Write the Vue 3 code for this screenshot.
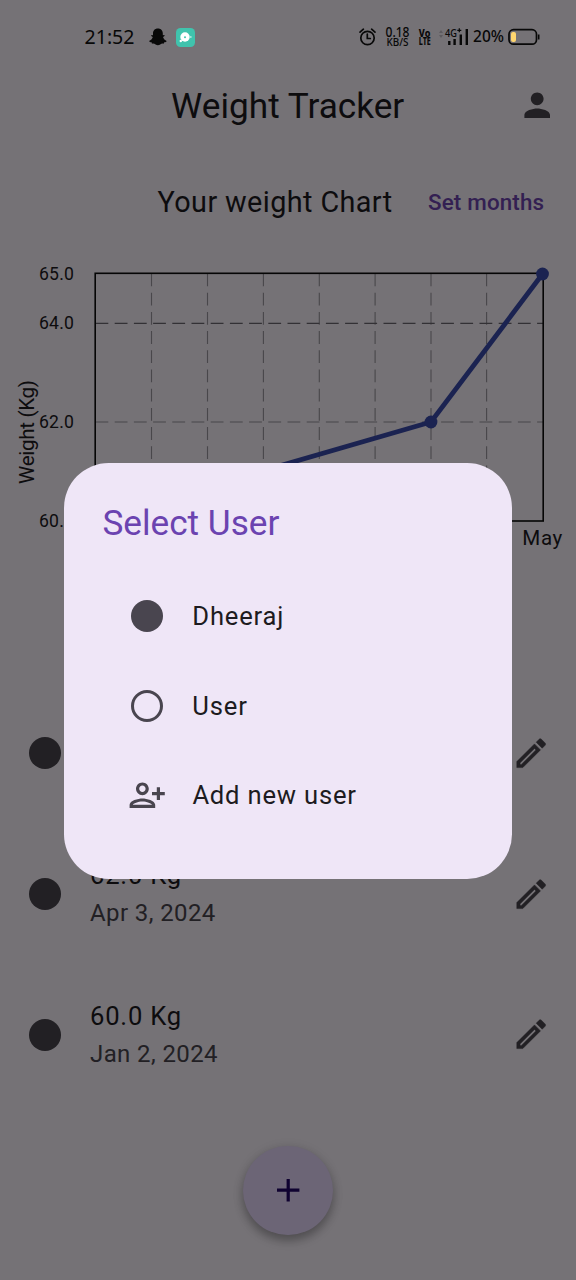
<script setup>
const entries = [
  { weight: '65.0 Kg', date: 'May 2, 2024' },
  { weight: '62.0 Kg', date: 'Apr 3, 2024' },
  { weight: '60.0 Kg', date: 'Jan 2, 2024' },
]
const columns = [151.5, 207.5, 263.4, 319.3, 375.1, 431, 486.6]
const pencil =
  'M14.06 9.02l.92.92L5.92 19H5v-.92l9.06-9.06M17.66 3c-.25 0-.51.1-.7.29l-1.83 1.83 3.75 3.75 1.83-1.83c.39-.39.39-1.02 0-1.41l-2.34-2.34c-.2-.2-.45-.29-.71-.29zm-3.6 3.19L3 17.25V21h3.75L17.81 9.94l-3.75-3.75z'
const person =
  'M12 12c2.21 0 4-1.79 4-4s-1.79-4-4-4-4 1.79-4 4 1.79 4 4 4zm0 2c-2.67 0-8 1.34-8 4v2h16v-2c0-2.66-5.33-4-8-4z'
const personAdd =
  'M13 8c0-2.21-1.79-4-4-4S5 5.79 5 8s1.79 4 4 4 4-1.79 4-4zm-2 0c0 1.1-.9 2-2 2s-2-.9-2-2 .9-2 2-2 2 .9 2 2zM1 18v2h16v-2c0-2.66-5.33-4-8-4s-8 1.34-8 4zm2 0c.2-.71 3.3-2 6-2 2.69 0 5.77 1.28 6 2H3zm17-3v-3h3v-2h-3V7h-2v3h-3v2h3v3h2z'
</script>

<template>
  <div class="screen">
    <svg class="status" viewBox="0 0 576 66">
      <text class="clock" x="84.5" y="44.2" textLength="50" lengthAdjust="spacingAndGlyphs">21:52</text>
      <!-- ghost notification -->
      <path d="M157.900 28.600c-3.200 0-4.900 2.200-4.900 4.900v1.700l-1.500-.3c-.8.700 0 1.500 1.300 2-.6 2-1.900 3.300-3.700 4 .2 1 1.300 1.200 2.500 1.400l.4 1.400c1.500-.2 2.500-.1 3.600.8 1.500 1 3.100 1 4.600 0 1.100-.9 2.100-1 3.600-.8l.4-1.400c1.200-.2 2.300-.4 2.500-1.400-1.800-.7-3.100-2-3.700-4 1.300-.5 2.100-1.300 1.300-2l-1.500.3v-1.700c0-2.700-1.700-4.900-4.900-4.900z" />
      <!-- teal app notification -->
      <rect x="176" y="28" width="19" height="19" rx="4.500" fill="#40c3ad" />
      <circle cx="185" cy="37" r="4.700" fill="#fff" />
      <circle cx="180.800" cy="41" r="1.200" fill="#fff" />
      <circle cx="190.700" cy="37" r="1.100" fill="#a9e6dc" />
      <circle cx="185" cy="37.200" r="1" fill="#40c3ad" />
      <!-- alarm -->
      <g fill="none" stroke="#080808" stroke-width="1.700" stroke-linecap="round">
        <circle cx="367.500" cy="38" r="6.700" />
        <path d="M367.300 34.200v4.300h3M360 32.200l3.400-3M375 32.200l-3.400-3" />
      </g>
      <text class="st" x="385.500" y="37" font-size="13.500" textLength="24" lengthAdjust="spacingAndGlyphs">0.18</text>
      <text class="st" x="386.500" y="46.300" font-size="10.300" textLength="22" lengthAdjust="spacingAndGlyphs">KB/S</text>
      <text class="st bold" x="418.800" y="36.500" font-size="10.500" textLength="11.500" lengthAdjust="spacingAndGlyphs">Vo</text>
      <text class="st bold" x="418.800" y="45.300" font-size="10.500" textLength="12" lengthAdjust="spacingAndGlyphs">LTE</text>
      <path d="M439 33l2-3 2 3zM439 35l2 3 2-3z" fill="#5d5b5f" />
      <text class="st" x="445" y="37" font-size="11.500" textLength="12" lengthAdjust="spacingAndGlyphs">4G</text>
      <path d="M459.300 28.300v4M457.300 30.300h4" stroke="#080808" stroke-width="1.200" />
      <path d="M449.300 41v4M454.600 39v6M460.800 34.500V45M466.800 29v16" stroke="#080808" stroke-width="2.400" />
      <text class="st" x="473" y="42.400" font-size="15.600" textLength="31" lengthAdjust="spacingAndGlyphs">20%</text>
      <rect x="509" y="29.700" width="27.500" height="14.500" rx="4.500" fill="none" stroke="#080808" stroke-width="1.700" />
      <rect x="511" y="32" width="5" height="10" rx="2" fill="#ffd66f" />
      <path d="M538.700 34.500v5" stroke="#080808" stroke-width="1.600" />
    </svg>

    <header class="bar">
      <h1>Weight Tracker</h1>
      <svg class="icon" viewBox="0 0 24 24"><path :d="person" /></svg>
    </header>

    <section class="heading">
      <h2>Your weight Chart</h2>
      <span class="months">Set months</span>
    </section>

    <svg class="chart" viewBox="0 250 576 320">
      <g stroke="#49474b" stroke-width="1.100" stroke-dasharray="12.8 6.4">
        <path v-for="x in columns" :key="x" :d="`M${x} 273.500V521`" />
        <path d="M95.500 422H543" />
        <path d="M95.500 323.400H543" stroke="#333135" />
      </g>
      <rect x="95.200" y="273.300" width="448" height="247.700" fill="none" stroke="#050505" stroke-width="1.600" />
      <path d="M95 519.500L431 422L542.500 274" fill="none" stroke="#1b2351" stroke-width="4.800" />
      <g fill="#1b2351">
        <circle cx="95" cy="519.500" r="6.400" />
        <circle cx="431" cy="422" r="6.400" />
        <circle cx="542.500" cy="274" r="6.400" />
      </g>
      <g class="tick">
        <text x="39" y="280" textLength="35">65.0</text>
        <text x="39" y="329.300" textLength="35">64.0</text>
        <text x="39" y="428" textLength="35">62.0</text>
        <text x="39" y="526.500" textLength="35">60.0</text>
      </g>
      <text class="axis" x="522.300" y="544.600" textLength="40">May</text>
      <text class="axis" transform="translate(34 484) rotate(-90)" textLength="104">Weight (Kg)</text>
    </svg>

    <main class="list">
      <article v-for="e in entries" :key="e.date" class="entry">
        <i class="dot"></i>
        <div class="info">
          <div class="weight">{{ e.weight }}</div>
          <div class="date">{{ e.date }}</div>
        </div>
        <svg class="icon pencil" viewBox="0 0 24 24"><path :d="pencil" /></svg>
      </article>
    </main>

    <div class="fab">
      <svg class="icon plus" viewBox="0 0 24 24"><path d="M19 13h-6v6h-2v-6H5v-2h6V5h2v6h6v2z" /></svg>
    </div>

    <div class="dialog">
      <h3>Select User</h3>
      <div class="option"><i class="dot"></i><span>Dheeraj</span></div>
      <div class="option"><i class="dot ring"></i><span>User</span></div>
      <div class="option">
        <svg class="icon" viewBox="0 0 24 24"><path :d="personAdd" /></svg><span>Add new user</span>
      </div>
    </div>
  </div>
</template>

<style>
body {
  background: #757276;
}
</style>

<style scoped>
.screen {
  position: relative;
  width: 576px;
  height: 1280px;
  overflow: hidden;
  background: #757276;
  color: #0d0c0e;
  font-family: Roboto, sans-serif;
}
h1, h2, h3 {
  margin: 0;
  font-weight: 400;
}
.status {
  display: block;
  width: 576px;
  height: 66px;
  fill: #080808;
}
.clock {
  font: 400 20px "Noto Sans", sans-serif;
}
.st {
  font-family: "Noto Sans", sans-serif;
  font-weight: 500;
}
.bold {
  font-weight: 800;
}
.icon {
  display: block;
  width: 38.4px;
  height: 38.4px;
  flex: none;
  fill: #222024;
}
.pencil {
  stroke: #222024;
  stroke-width: 0.3;
}
.bar {
  display: grid;
  grid-template-columns: 57px 1fr 57.600px;
  align-items: center;
  height: 79px;
}
.bar h1 {
  grid-column: 2;
  text-align: center;
  font-size: 35.2px;
  line-height: 44px;
}
.heading {
  display: flex;
  align-items: center;
  height: 113px;
  padding-left: 157.500px;
}
.heading h2 {
  width: 270.500px;
  font-size: 28.8px;
  letter-spacing: 0.400px;
  white-space: nowrap;
}
.months {
  color: #332052;
  font-size: 22.4px;
  font-weight: 500;
  letter-spacing: 0.16px;
  white-space: nowrap;
}
.chart {
  display: block;
  width: 576px;
  height: 320px;
  margin-top: -8px;
}
.tick {
  font-size: 17.6px;
}
.axis {
  font-size: 20.6px;
}
.chart text {
  fill: #0d0c0e;
}
.list {
  padding-top: 112.600px;
}
.entry {
  display: flex;
  align-items: center;
  height: 140.800px;
  padding: 0 25.600px 0 28.800px;
}
.dot {
  box-sizing: border-box;
  flex: none;
  width: 32px;
  height: 32px;
  border-radius: 50%;
  background: #222024;
}
.info {
  flex: 1;
  margin-left: 29.200px;
}
.weight {
  font-size: 25.6px;
  line-height: 38px;
  letter-spacing: 0.8px;
}
.date {
  color: #222024;
  font-size: 24px;
  line-height: 38px;
  letter-spacing: 0.4px;
}
.fab {
  position: absolute;
  left: 243.200px;
  top: 1145.800px;
  display: grid;
  place-items: center;
  width: 89.600px;
  height: 89.600px;
  border-radius: 50%;
  background: #6c6576;
  box-shadow: 0 6px 10px rgba(0, 0, 0, 0.25), 0 2px 12px rgba(0, 0, 0, 0.12);
}
.plus {
  fill: #0f0230;
}
.dialog {
  position: absolute;
  left: 64px;
  top: 462.800px;
  box-sizing: border-box;
  width: 448px;
  height: 416px;
  padding: 38.400px;
  border-radius: 44.800px;
  background: #efe6f7;
  color: #1d1b20;
}
.dialog h3 {
  margin-bottom: 25px;
  color: #6b43b0;
  font-size: 35.2px;
  line-height: 45px;
}
.option {
  display: flex;
  align-items: center;
  height: 89.600px;
  padding-left: 25.600px;
  font-size: 25.6px;
  letter-spacing: 0.8px;
}
.option .icon {
  fill: #49454f;
}
.option .dot {
  margin: 3.200px;
  background: #49454f;
}
.option .ring {
  border: 3.200px solid #49454f;
  background: none;
}
.option span {
  margin-left: 26px;
}
</style>
